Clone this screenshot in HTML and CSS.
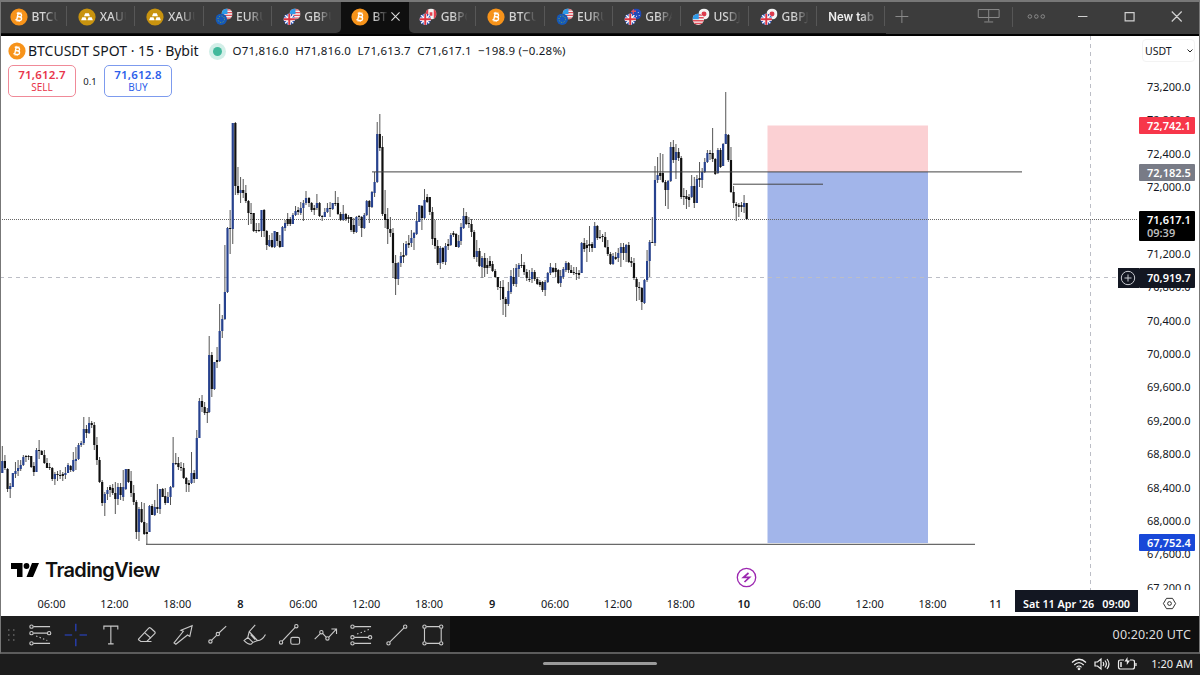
FILE: index.html
```html
<!DOCTYPE html>
<html lang="en">
<head>
    <meta charset="UTF-8">
    <meta name="viewport" content="width=device-width, initial-scale=1.0">
    <title>BTCUSDT 71,617.1</title>
    <link rel="stylesheet" href="styles.css">
</head>
<body>
    <svg class="defs" width="0" height="0">
        <clipPath id="small"><circle cx="6" cy="6" r="6"/></clipPath>
        <symbol id="btc" viewBox="0 0 18 18">
            <circle cx="9" cy="9" r="8.6" fill="#f7931a"/>
            <g fill="none" stroke="#fff" stroke-width="1.4" transform="rotate(12 9 9)">
                <path d="M6 5.6h3.6a1.6 1.6 0 0 1 0 3.2H7.4h2.7a1.7 1.7 0 0 1 0 3.5H6M7.4 5.6v6.7"/>
                <path d="M8 4v1.5M10 4v1.5M8 12.3v1.6M10 12.3v1.6" stroke-width="1"/>
            </g>
        </symbol>
        <symbol id="xau" viewBox="0 0 18 18">
            <circle cx="9" cy="9" r="8.6" fill="#c8930f"/>
            <path d="M7.2 5.3h3.6l1.2 3H6zM4.3 9.2h3.2l1.1 3H3.1zM10.5 9.2h3.2l1.2 3H9.4z" fill="#fff"/>
        </symbol>
        <symbol id="eu" viewBox="0 0 12 12">
            <circle cx="6" cy="6" r="6" fill="#1558b8"/>
            <circle cx="6" cy="6" r="3.4" fill="none" stroke="#8fb43c" stroke-width="1" stroke-dasharray="1 1.67"/>
        </symbol>
        <symbol id="gb" viewBox="0 0 12 12">
            <g clip-path="url(#small)">
                <path d="M0 0h12v12H0z" fill="#2a52b5"/>
                <path d="M0 0l12 12M12 0L0 12" stroke="#fff" stroke-width="1.4"/>
                <path d="M6 0v12M0 6h12" stroke="#fff" stroke-width="3.4"/>
                <path d="M6 0v12M0 6h12" stroke="#dc3340" stroke-width="2"/>
            </g>
        </symbol>
        <symbol id="us" viewBox="0 0 12 12">
            <g clip-path="url(#small)">
                <path d="M0 0h12v12H0z" fill="#f4f4f4"/>
                <path d="M0 1.5h12M0 4.5h12M0 7.5h12M0 10.5h12" stroke="#e2505c" stroke-width="1.5"/>
                <path d="M0 0h6.5v6H0z" fill="#2e9be8"/>
            </g>
        </symbol>
        <symbol id="ca" viewBox="0 0 12 12">
            <g clip-path="url(#small)">
                <path d="M0 0h12v12H0z" fill="#f4f4f4"/>
                <path d="M0 0h3v12H0zM9 0h3v12H9zM4.5 4h3v4h-3z" fill="#e2404e"/>
            </g>
        </symbol>
        <symbol id="au" viewBox="0 0 12 12">
            <g clip-path="url(#small)">
                <path d="M0 0h12v12H0z" fill="#2149b8"/>
                <path d="M3 0v6M0 3h6" stroke="#e2505c" stroke-width="1.4"/>
                <path d="M8 4h1v1H8zM6 8h1v1H6zM9 7h1v1H9z" fill="#fff"/>
            </g>
        </symbol>
        <symbol id="jp" viewBox="0 0 12 12">
            <circle cx="6" cy="6" r="6" fill="#f4f4f4"/>
            <circle cx="6" cy="6" r="2.7" fill="#dc3b4c"/>
        </symbol>
    </svg>

    <div class="window">
        <header class="tabbar">
            <div class="tab"><svg class="coin"><use href="#btc"/></svg><span class="name">BTCU</span></div>
            <div class="tab"><svg class="coin"><use href="#xau"/></svg><span class="name">XAUU</span></div>
            <div class="tab"><svg class="coin"><use href="#xau"/></svg><span class="name">XAUU</span></div>
            <div class="tab"><svg class="coin"><use href="#us" x="6.5" y="0.5" width="11" height="11"/><use href="#eu" x="0.5" y="5.5" width="11.5" height="11.5"/></svg><span class="name">EURU</span></div>
            <div class="tab last"><svg class="coin"><use href="#us" x="6.5" y="0.5" width="11" height="11"/><use href="#gb" x="0.5" y="5.5" width="11.5" height="11.5"/></svg><span class="name">GBPU</span></div>
            <div class="tab active"><svg class="coin"><use href="#btc"/></svg><span class="name">BTC</span><svg class="close" viewBox="0 0 10 10"><path d="M.5 .5l9 9M9.5 .5l-9 9"/></svg></div>
            <div class="tab first"><svg class="coin"><use href="#ca" x="6.5" y="0.5" width="11" height="11"/><use href="#gb" x="0.5" y="5.5" width="11.5" height="11.5"/></svg><span class="name">GBPC</span></div>
            <div class="tab"><svg class="coin"><use href="#btc"/></svg><span class="name">BTCU</span></div>
            <div class="tab"><svg class="coin"><use href="#us" x="6.5" y="0.5" width="11" height="11"/><use href="#eu" x="0.5" y="5.5" width="11.5" height="11.5"/></svg><span class="name">EURU</span></div>
            <div class="tab"><svg class="coin"><use href="#au" x="6.5" y="0.5" width="11" height="11"/><use href="#gb" x="0.5" y="5.5" width="11.5" height="11.5"/></svg><span class="name">GBPA</span></div>
            <div class="tab"><svg class="coin"><use href="#jp" x="6.5" y="0.5" width="11" height="11"/><use href="#us" x="0.5" y="5.5" width="11.5" height="11.5"/></svg><span class="name">USDJ</span></div>
            <div class="tab"><svg class="coin"><use href="#jp" x="6.5" y="0.5" width="11" height="11"/><use href="#gb" x="0.5" y="5.5" width="11.5" height="11.5"/></svg><span class="name">GBPJ</span></div>
            <div class="tab new"><span class="name">New tab</span></div>
            <svg class="controls" viewBox="0 0 315 30">
                <g fill="none" stroke="#8a8a8a">
                    <path d="M9.500 14.500h13M16 8v13"/>
                    <path d="M93 7.500h21v8H93zM103.500 7.500v12M99 20h9"/>
                    <path d="M127.500 5v20" stroke="#575757"/>
                    <circle cx="145" cy="14.500" r="1.800"/>
                    <circle cx="151.500" cy="14.500" r="1.800"/>
                    <circle cx="158" cy="14.500" r="1.800"/>
                </g>
                <g fill="none" stroke="#d0d0d0" stroke-width="1.200">
                    <path d="M193.500 14.500h9.500M241 10.500h9v8.500h-9zM288 9.500l10 10M298 9.500l-10 10"/>
                </g>
            </svg>
        </header>

        <main class="chart">
            <div class="plot">
                <svg class="canvas" viewBox="0 36 1138 554">
                    <rect x="767.500" y="125.500" width="160.500" height="46.500" fill="#fbd0d3"/>
                    <rect x="767.500" y="172" width="160.500" height="371" fill="#a2b5ea"/>
                    <path d="M0 277.500H1118M1090.500 36V590" stroke="#bcbec6" stroke-dasharray="4 4"/>
                    <path d="M0 219.500H1138" stroke="#666" stroke-dasharray="1 1"/>
                    <g id="candles"></g>
                    <path d="M372 171.900H1022M733 184.200H823M146 544.300H975" stroke="#444"/>
                    <g fill="none" stroke="#9c27b0" stroke-width="1.300">
                        <circle cx="746.500" cy="577.500" r="9.200"/>
                        <path d="M748.500 573l-5 4.300h6l-5 4.700" stroke-width="1.700"/>
                    </g>
                </svg>
                <div class="legend">
                    <div class="title-row">
                        <svg class="symbol-icon"><use href="#btc"/></svg>
                        <span class="symbol">BTCUSDT SPOT · 15 · Bybit</span>
                        <span class="status"></span>
                        <span class="ohlc">O71,816.0&nbsp; H71,816.0&nbsp; L71,613.7&nbsp; C71,617.1&nbsp; −198.9 (−0.28%)</span>
                    </div>
                    <div class="trade-row">
                        <button class="sell"><b>71,612.7</b>SELL</button>
                        <span class="spread">0.1</span>
                        <button class="buy"><b>71,612.8</b>BUY</button>
                    </div>
                </div>
                <div class="brand">
                    <svg viewBox="0 0 28 15"><path d="M0 0h11.500v14H6V6H0zM21 0h7l-6 14h-6.500z"/><circle cx="15.500" cy="3" r="2.900"/></svg>
                    <span>TradingView</span>
                </div>
            </div>

            <aside class="prices">
                <div class="currency"><span>USDT</span><svg viewBox="0 0 6 4"><path d="M.5 .5L3 3L5.500 .5"/></svg></div>
                <div class="scale">
                    <span>73,200.0</span>
                    <span>72,800.0</span>
                    <span>72,400.0</span>
                    <span>72,000.0</span>
                    <span>71,600.0</span>
                    <span>71,200.0</span>
                    <span>70,800.0</span>
                    <span>70,400.0</span>
                    <span>70,000.0</span>
                    <span>69,600.0</span>
                    <span>69,200.0</span>
                    <span>68,800.0</span>
                    <span>68,400.0</span>
                    <span>68,000.0</span>
                    <span>67,600.0</span>
                    <span>67,200.0</span>
                </div>
                <div class="tag stop">72,742.1</div>
                <div class="tag entry">72,182.5</div>
                <div class="tag last-price">71,617.1<small>09:39</small></div>
                <div class="tag cursor">70,919.7</div>
                <div class="tag target">67,752.4</div>
                <div class="add"><svg viewBox="0 0 16 16"><circle cx="8" cy="8" r="6.700"/><path d="M8 4.500v7M4.500 8h7"/></svg></div>
            </aside>

            <div class="times">
                <span>06:00</span>
                <span>12:00</span>
                <span>18:00</span>
                <span class="day">8</span>
                <span>06:00</span>
                <span>12:00</span>
                <span>18:00</span>
                <span class="day">9</span>
                <span>06:00</span>
                <span>12:00</span>
                <span>18:00</span>
                <span class="day">10</span>
                <span>06:00</span>
                <span>12:00</span>
                <span>18:00</span>
                <span class="day">11</span>
                <div class="time-tag"><span>Sat 11 Apr '26</span><span>09:00</span></div>
            </div>
            <div class="settings">
                <svg viewBox="0 0 16 16"><path d="M4.800 2.500h6.400L14.500 8l-3.300 5.500H4.800L1.500 8z"/><circle cx="8" cy="8" r="2"/></svg>
            </div>
        </main>

        <footer class="toolbar">
            <div class="tools">
                <svg class="grip" viewBox="0 0 8 14"><path d="M1 2h1.500M6 2h1.500M1 7h1.500M6 7h1.500M1 12h1.500M6 12h1.500"/></svg>
                <svg class="tool" viewBox="0 0 28 28"><circle cx="5" cy="5" r="1.800"/><circle cx="5" cy="12" r="1.800"/><circle cx="24" cy="12" r="1.800"/><circle cx="5" cy="23" r="1.800"/><path d="M7 5h18M7 12h15M7 23h18"/><path d="M10 15l12 5" stroke-dasharray="1.500 2.500"/></svg>
                <svg class="tool cross" viewBox="0 0 28 28"><path d="M14 2v8M14 18v8M2 14h8M18 14h8"/></svg>
                <svg class="tool" viewBox="0 0 28 28"><path d="M6.500 8V4.500h15V8M14 4.500v19M11 23.500h6"/></svg>
                <svg class="tool" viewBox="0 0 28 28"><path d="M5 18.500L16 6.500q1-1 2 0l4.500 4q1 1 0 2L14 21H7.500L5 19zM11.500 11.500l7 6M13 21h6"/></svg>
                <svg class="tool" viewBox="0 0 28 28"><path d="M4.500 22.500L14.500 10l-2.500-1L24 4l-2.500 11.500-2.500-1.500L6.500 24z"/></svg>
                <svg class="tool" viewBox="0 0 28 28"><circle cx="6" cy="21" r="1.800"/><circle cx="14" cy="13" r="1.800"/><path d="M7.400 19.600l5.200-5.200M15.400 11.600L23 4.500"/></svg>
                <svg class="tool" viewBox="0 0 28 28"><path d="M15.500 3L9 10.500l9 9.500q5 0 8.500-6.500M9 10.500l-1.500 6L13 22l5-2M7.500 16.500L3.500 20q4 4 7.500 4l2-2M10.500 13.500l5 5.500"/></svg>
                <svg class="tool" viewBox="0 0 28 28"><circle cx="4.500" cy="22" r="1.800"/><circle cx="21" cy="4.500" r="1.800"/><path d="M5.800 20.700L19.700 5.800"/><rect x="15" y="16.500" width="9.500" height="7.500" rx="2"/></svg>
                <svg class="tool" viewBox="0 0 28 28"><path d="M2 18.500l5.800-5.800M10.500 12.200l4 4.300M17 16.500L25 8M20 7.500h5.500v5.500"/><circle cx="9.200" cy="11" r="1.800"/><circle cx="15.700" cy="17.700" r="1.800"/></svg>
                <svg class="tool" viewBox="0 0 28 28"><circle cx="5" cy="5" r="1.800"/><circle cx="5" cy="16.500" r="1.800"/><circle cx="24" cy="16.500" r="1.800"/><circle cx="5" cy="23" r="1.800"/><path d="M7 5h18M7 16.500h15M7 23h18"/><path d="M10 13l13-5" stroke-dasharray="1.500 2.500"/></svg>
                <svg class="tool" viewBox="0 0 28 28"><circle cx="5" cy="23" r="1.800"/><circle cx="23" cy="5" r="1.800"/><path d="M6.300 21.700L21.700 6.300"/></svg>
                <svg class="tool" viewBox="0 0 28 28"><circle cx="5" cy="5" r="1.800"/><circle cx="23" cy="5" r="1.800"/><circle cx="5" cy="23" r="1.800"/><circle cx="23" cy="23" r="1.800"/><path d="M7 5h14M7 23h14M5 7v14M23 7v14"/></svg>
            </div>
            <span class="clock">00:20:20 UTC</span>
        </footer>
    </div>

    <div class="taskbar">
        <span class="home-bar"></span>
        <div class="tray">
            <svg class="wifi" viewBox="0 0 16 14"><path d="M1 5.500Q8-1 15 5.500M3.300 8Q8 3.300 12.700 8M5.500 10.300Q8 7.700 10.500 10.300"/><circle cx="8" cy="11.800" r=".8"/></svg>
            <svg class="sound" viewBox="0 0 16 14"><path d="M1 5h2.500L7 2v10L3.500 9H1zM9 5q1.500 2 0 4M11 3.500q2.800 3.500 0 7M13 2q4 5 0 10"/></svg>
            <svg class="battery" viewBox="0 0 20 14"><path d="M7 3H3.500Q1.500 3 1.500 5v5q0 2 2 2h12q2 0 2-2V5q0-2-2-2H13M19 6v3"/><path d="M4 5v5" stroke-width="1.500"/><path d="M10.500 0L7.500 4.500h2.300V8L13 3.500h-2.500z" fill="#eee" stroke="none"/></svg>
            <span>1:20 AM</span>
        </div>
    </div>

    <script src="script.js"></script>
</body>
</html>
```
FILE: styles.css
```css
* {
    box-sizing: border-box;
}
body {
    margin: 0;
    width: 1200px;
    height: 675px;
    overflow: hidden;
    background-color: #1c1c1c;
    color: #131722;
    font-family: "Noto Sans", "Open Sans", sans-serif;
    font-size: 11px;
}
svg {
    display: block;
    flex-shrink: 0;
}
.defs {
    position: absolute;
}
.window {
    display: flex;
    flex-direction: column;
    height: 654px;
    border: 1px solid #777;
    border-top-width: 2px;
    border-bottom: 2px solid #5c5c5c;
}

/* tabs */
.tabbar {
    display: flex;
    height: 34px;
    background-color: #0f0f0f;
    border-bottom: 2px solid #000;
}
.tab {
    position: relative;
    display: flex;
    flex-shrink: 0;
    align-items: center;
    width: 68.2px;
    height: 31px;
    padding: 0 9px 2px 9px;
    gap: 3.5px;
    background-color: #3c3c3c;
    color: #d4d4d4;
    font-size: 12px;
    font-weight: 500;
}
.tab:first-child {
    width: 67.2px;
    padding-left: 9px;
}
.tab:not(:first-child) {
    padding-left: 10px;
}
.tab::after {
    content: "";
    position: absolute;
    right: 1px;
    top: 4px;
    height: 20px;
    border-right: 1px solid #575757;
}
.coin {
    width: 18px;
    height: 18px;
}
.tab .name {
    width: 28px;
    overflow: hidden;
    white-space: nowrap;
    -webkit-mask-image: linear-gradient(90deg, #000 45%, transparent 98%);
    mask-image: linear-gradient(90deg, #000 45%, transparent 98%);
}
.tab.last {
    border-bottom-right-radius: 5px;
}
.tab.first {
    border-bottom-left-radius: 5px;
}
.tab.active {
    background-color: #0f0f0f;
}
.tab.active::after, .tab.last::after {
    display: none;
}
.tab.active .name {
    width: 15px;
    -webkit-mask-image: linear-gradient(90deg, #000 10%, transparent 110%);
    mask-image: linear-gradient(90deg, #000 10%, transparent 110%);
}
.close {
    width: 9px;
    height: 9px;
    fill: none;
    stroke: #ddd;
    stroke-width: 1.2;
}
.tab.new {
    color: #eee;
    font-family: "Inter", sans-serif;
    font-size: 11.5px;
    font-weight: 600;
}
.tab.new .name {
    width: 47px;
    -webkit-mask-image: linear-gradient(90deg, #000 65%, transparent 105%);
    mask-image: linear-gradient(90deg, #000 65%, transparent 105%);
}
.controls {
    flex: 1;
    height: 32px;
    padding-bottom: 2px;
    background-color: #3c3c3c;
}

/* chart */
.chart {
    display: grid;
    grid-template-columns: 1137px 1fr;
    grid-template-rows: 554px 1fr;
    height: 580px;
    background-color: #fff;
}
.plot {
    position: relative;
    overflow: hidden;
}
.canvas {
    width: 1138px;
    height: 554px;
    margin-left: -1px;
}
.up {
    stroke: #27428f;
}
.down {
    stroke: #101010;
}
.wick {
    stroke: #555;
    stroke-width: 1;
}
.body {
    stroke-width: 2.2;
}
.legend {
    position: absolute;
    left: 7px;
    top: 5px;
}
.title-row, .trade-row {
    display: flex;
    align-items: center;
}
.title-row {
    height: 20px;
}
.symbol-icon {
    width: 18px;
    height: 18px;
    margin-right: 2px;
}
.symbol {
    width: 174px;
    font-size: 14px;
    line-height: 18px;
    white-space: nowrap;
}
.status {
    width: 9px;
    height: 9px;
    margin: 0 11px 0 10.5px;
    border-radius: 50%;
    background-color: #42b99c;
    box-shadow: 0 0 0 4px #d2efe8;
}
.ohlc {
    font-size: 11.5px;
    line-height: 16px;
    letter-spacing: 0.19px;
    white-space: nowrap;
}
.trade-row {
    margin-top: 4px;
    gap: 7px;
}
.trade-row button {
    width: 68px;
    height: 32px;
    padding: 0 0 2px;
    border: 1px solid;
    border-radius: 5px;
    background-color: #fff;
    font-family: inherit;
    font-size: 10px;
    line-height: 12px;
}
.trade-row b {
    display: block;
    font-size: 11.5px;
    font-weight: 600;
    line-height: 13px;
    letter-spacing: 0.2px;
}
.trade-row .sell {
    border-color: #f08a98;
    color: #e8354b;
}
.trade-row .buy {
    border-color: #7d9bee;
    color: #2d60ea;
}
.spread {
    width: 14px;
    font-size: 9.5px;
    text-align: center;
}
.brand {
    position: absolute;
    left: 10px;
    top: 522px;
    display: flex;
    align-items: center;
    gap: 6px;
    color: #111;
    font-family: "Inter", sans-serif;
    font-size: 20px;
    font-weight: 600;
    line-height: 24px;
    letter-spacing: -0.65px;
}
.brand svg {
    width: 28px;
    height: 15px;
}

/* price scale */
.prices {
    position: relative;
    overflow: visible;
}
.currency {
    display: flex;
    align-items: center;
    gap: 15px;
    width: 53px;
    height: 23px;
    margin: 3px 0 0 4px;
    padding-left: 2px;
    border: 1px solid #f3f3f3;
    border-radius: 4px;
    font-size: 10.5px;
}
.currency svg {
    width: 6px;
    height: 4px;
    fill: none;
    stroke: #222;
}
.scale {
    display: flex;
    flex-direction: column;
    height: 520px;
    margin-top: 8px;
    overflow: hidden;
}
.scale span {
    flex: none;
    height: 33.38px;
    padding-left: 9px;
    line-height: 33.38px;
}
.tag {
    position: absolute;
    left: 1px;
    width: 56px;
    height: 17px;
    padding-left: 8px;
    border-radius: 1px;
    color: #fff;
    font-weight: 600;
    line-height: 17px;
}
.stop {
    top: 81px;
    background-color: #f7364a;
}
.entry {
    top: 128px;
    background-color: #787b86;
}
.last-price {
    top: 175px;
    height: 30px;
    padding-top: 2px;
    background-color: #000;
    line-height: 13px;
}
.last-price small {
    display: block;
    color: #bbb;
    font-size: 11px;
}
.cursor {
    top: 232px;
    height: 20px;
    background-color: #131722;
    line-height: 20px;
}
.target {
    top: 498px;
    background-color: #1848d8;
}
.add {
    position: absolute;
    left: -20px;
    top: 232px;
    width: 20.5px;
    height: 20px;
    padding: 2px;
    background-color: #131722;
}
.add svg {
    width: 16px;
    height: 16px;
    fill: none;
    stroke: #c8cad0;
}

/* time scale */
.times {
    position: relative;
    display: flex;
    padding-left: 19px;
}
.times > span {
    width: 62.94px;
    text-align: center;
    line-height: 27px;
}
.times .day {
    font-weight: 600;
}
.times .day:nth-child(16) {
    font-weight: 500;
}
.time-tag {
    position: absolute;
    left: 1014px;
    top: 0;
    display: flex;
    justify-content: space-between;
    width: 123px;
    height: 22px;
    padding: 0 8px;
    background-color: #131722;
    color: #fff;
    font-size: 10.8px;
    font-weight: 600;
    line-height: 27px;
}
.settings {
    padding: 6px 0 0 24px;
}
.settings svg {
    width: 15px;
    height: 15px;
    fill: none;
    stroke: #222;
}

/* drawing toolbar */
.toolbar {
    display: flex;
    align-items: center;
    justify-content: space-between;
    height: 36px;
    padding-right: 8px;
    background-color: #0f0f0f;
}
.tools {
    display: flex;
    align-items: center;
    width: 449px;
    height: 36px;
    padding-top: 1px;
    background-color: #1f1f1f;
}
.grip {
    width: 8px;
    height: 14px;
    margin: 0 7px 0 6px;
    stroke: #666;
    stroke-width: 1.3;
}
.tool {
    width: 35.7px;
    height: 26px;
    fill: none;
    stroke: #c9c9c9;
    stroke-width: 1.2;
}
.tool.cross {
    stroke: #2a48d8;
}
.clock {
    color: #dedede;
    font-size: 12.5px;
    letter-spacing: 0.15px;
}

/* system bar */
.taskbar {
    position: relative;
    display: flex;
    justify-content: flex-end;
    height: 21px;
    padding-right: 7px;
}
.home-bar {
    position: absolute;
    left: 543px;
    top: 8px;
    width: 114px;
    height: 3px;
    border-radius: 2px;
    background-color: #9a9a9a;
}
.tray {
    display: flex;
    align-items: center;
    height: 19px;
    gap: 7px;
    color: #eee;
    font-size: 11px;
}
.tray svg {
    height: 14px;
    fill: none;
    stroke: #eee;
    stroke-width: 1.2;
}
.wifi, .sound {
    width: 16px;
}
.battery {
    width: 20px;
    margin-right: 7px;
}
```
FILE: script.js
```js
// Each run: first x, last x, then candles as "high top bottom low" (u = rising)
const runs = [
    [2.3, 91.7, `446 461 473 473u,455 461 468 470,468 469 489 492,483 486 489 498u,473 473 487 487u,462 471 474 478u,460 468 471 476u,460 465 469 471u,455 457 465 466u,455 456 457 462,455 456 457 460,456 456 467 468,462 466 472 476,448 450 472 472u,440 450 451 459,450 451 455 455,450 455 463 464,458 463 468 468,463 467 468 470,467 468 479 481,472 474 479 485u,471 474 475 481,470 475 476 479,472 474 476 481,467 473 475 479u,463 465 473 473u,465 466 470 472,452 460 471 472u,447 459 461 470u,443 445 459 460u,441 443 445 447u,417 429 443 445u,425 429 433 438,417 423 433 434u,421 423 425 428`],
    [94.3, 207.3, `422 425 445 450,437 445 460 465,457 460 482 483,480 482 503 506,492 494 503 516u,487 490 494 500u,485 487 490 497,484 488 493 495,482 493 499 514,483 487 499 505u,483 487 495 500,470 487 497 501u,469 469 489 490u,469 469 482 483,471 481 493 497,485 493 502 505,500 502 532 539,507 509 532 541u,502 509 522 523,503 522 534 535,523 532 534 544,505 506 532 532u,504 506 515 515,500 507 515 516u,484 507 509 513,489 489 509 514u,488 489 497 497,488 496 503 505,492 497 503 503u,486 487 497 505u,437 463 487 488u,453 463 464 465,457 463 467 470,462 467 468 471,463 468 478 479,477 478 484 492,480 483 485 492,452 473 483 484u,470 473 479 483,430 438 479 479u,398 401 438 438u,395 401 407 412,402 407 413 415,408 412 413 423`],
    [209.2, 306, `336 355 412 413u,352 355 389 397,362 362 389 390u,347 360 362 368,304 331 361 362u,315 319 331 338u,245 292 319 320u,227 228 292 293u,210 228 229 254,123 123 229 244u,122 123 186 195,167 186 193 195,177 190 193 203u,179 190 193 198,185 193 201 203,200 201 213 225,203 213 214 224,213 213 231 232,223 230 231 233,223 230 231 232,210 210 231 237u,209 210 231 237,230 231 245 250,235 240 246 247u,233 240 247 248,231 231 247 248u,232 232 241 246,235 241 247 248,226 227 247 247u,220 223 228 231u,213 219 224 226,217 219 224 226,213 215 224 224u,206 211 215 216u,207 210 212 215,202 208 213 215u,200 203 208 221u,191 198 203 205u`],
    [309, 364.3, `197 198 203 207,202 203 210 212,205 208 210 215,194 203 208 210u,202 203 216 217,215 216 217 221,208 212 217 217u,203 208 212 213u,202 208 209 217,203 203 209 210u,191 203 204 206,197 203 214 215,212 214 220 221,205 214 220 221u,213 214 219 221,215 217 219 223,217 217 230 232,218 225 232 234,216 217 232 233u,215 216 217 226,216 217 228 237,213 215 228 229u`],
    [366.7, 458.7, `200 201 215 216u,200 201 207 223,191 192 207 208u,172 182 193 197u,122 134 182 183u,114 134 148 151,136 147 214 216,190 214 220 228,208 219 229 244,217 229 233 237,228 233 263 278,255 263 279 295,262 263 279 285u,252 256 263 267u,243 255 257 263,241 244 255 256u,235 243 245 248,230 238 243 247u,232 233 238 250u,212 221 234 235u,205 205 222 222u,205 206 218 230,189 200 218 219u,194 197 202 203,197 197 212 215,207 212 239 245,220 238 246 249,240 246 263 265,246 248 263 269u,247 248 262 264,243 246 262 265u,239 244 246 250,233 235 245 246u,231 233 235 237,233 234 247 247,235 241 247 248u`],
    [461, 558.3, `223 227 241 245u,208 216 228 229u,212 216 224 225,217 223 224 228,219 224 232 237,230 232 257 259,240 251 257 262u,248 251 266 267,256 258 267 278u,253 258 268 277,258 265 268 274,256 261 266 268,261 264 271 272,269 271 277 278,277 277 287 290,281 287 288 300,280 287 299 315,297 299 304 317,282 291 304 306u,270 276 292 294u,268 277 284 286,264 268 284 287u,263 265 269 277u,254 265 266 268,262 265 272 275,269 272 278 281,270 279 280 282,268 272 279 283u,270 272 279 281,277 279 284 285,280 282 285 287,281 282 290 292,280 282 290 296u,272 273 282 283u,263 267 273 275u,267 268 272 273,263 268 272 277,269 270 283 284`],
    [560.7, 652.3, `270 276 283 287u,267 269 277 279u,261 263 270 272u,262 263 270 273,265 270 273 273,267 272 273 275,267 273 274 280,270 273 275 279,242 243 273 273u,238 243 249 252,240 245 248 262,226 244 246 252,242 244 248 252,222 226 248 248u,225 226 238 240,230 237 238 239,234 236 237 242,232 237 247 248,240 247 254 256,252 254 264 265,253 256 264 265u,252 257 259 260,248 253 258 262u,243 247 253 267u,243 247 253 260,244 245 253 262u,242 245 262 263,257 261 263 267,258 263 278 280,277 279 287 301,282 287 288 300,287 288 302 310,279 280 303 304u,250 261 280 282u,240 242 261 277u,217 242 243 243`],
    [655, 746.7, `166 180 243 246u,157 175 180 183u,153 173 176 180,154 173 182 183,180 182 190 206,180 181 190 209u,142 147 181 182u,140 147 160 163,144 152 160 179u,148 152 158 161,156 158 197 199,188 196 197 205,190 196 199 209,194 197 200 207,175 186 197 198u,177 186 203 208,175 179 203 203u,162 178 180 187,168 172 180 188u,158 162 172 173u,150 153 162 163u,150 153 154 160,128 153 159 162,158 159 174 175,148 150 173 174u,148 150 167 168,143 144 166 166u,92 134 144 144u,134 135 160 162,147 160 192 193,186 192 203 208,202 204 206 221,203 205 207 217,202 205 207 212,195 203 207 213u,203 203 219 220`]
];

let svg = '';
runs.forEach(([from, to, text]) => {
    const list = text.split(',');
    const step = (to - from) / (list.length - 1);
    list.forEach((item, i) => {
        const x = (from + i * step).toFixed(2);
        const [high, top, bottom, low] = item.replace('u', '').split(' ');
        const dir = item.endsWith('u') ? 'up' : 'down';
        svg += `<path class="wick" d="M${x} ${high}V${low}"/>`;
        svg += `<path class="body ${dir}" d="M${x} ${top}V${bottom}"/>`;
    });
});
document.getElementById('candles').innerHTML = svg;
```
